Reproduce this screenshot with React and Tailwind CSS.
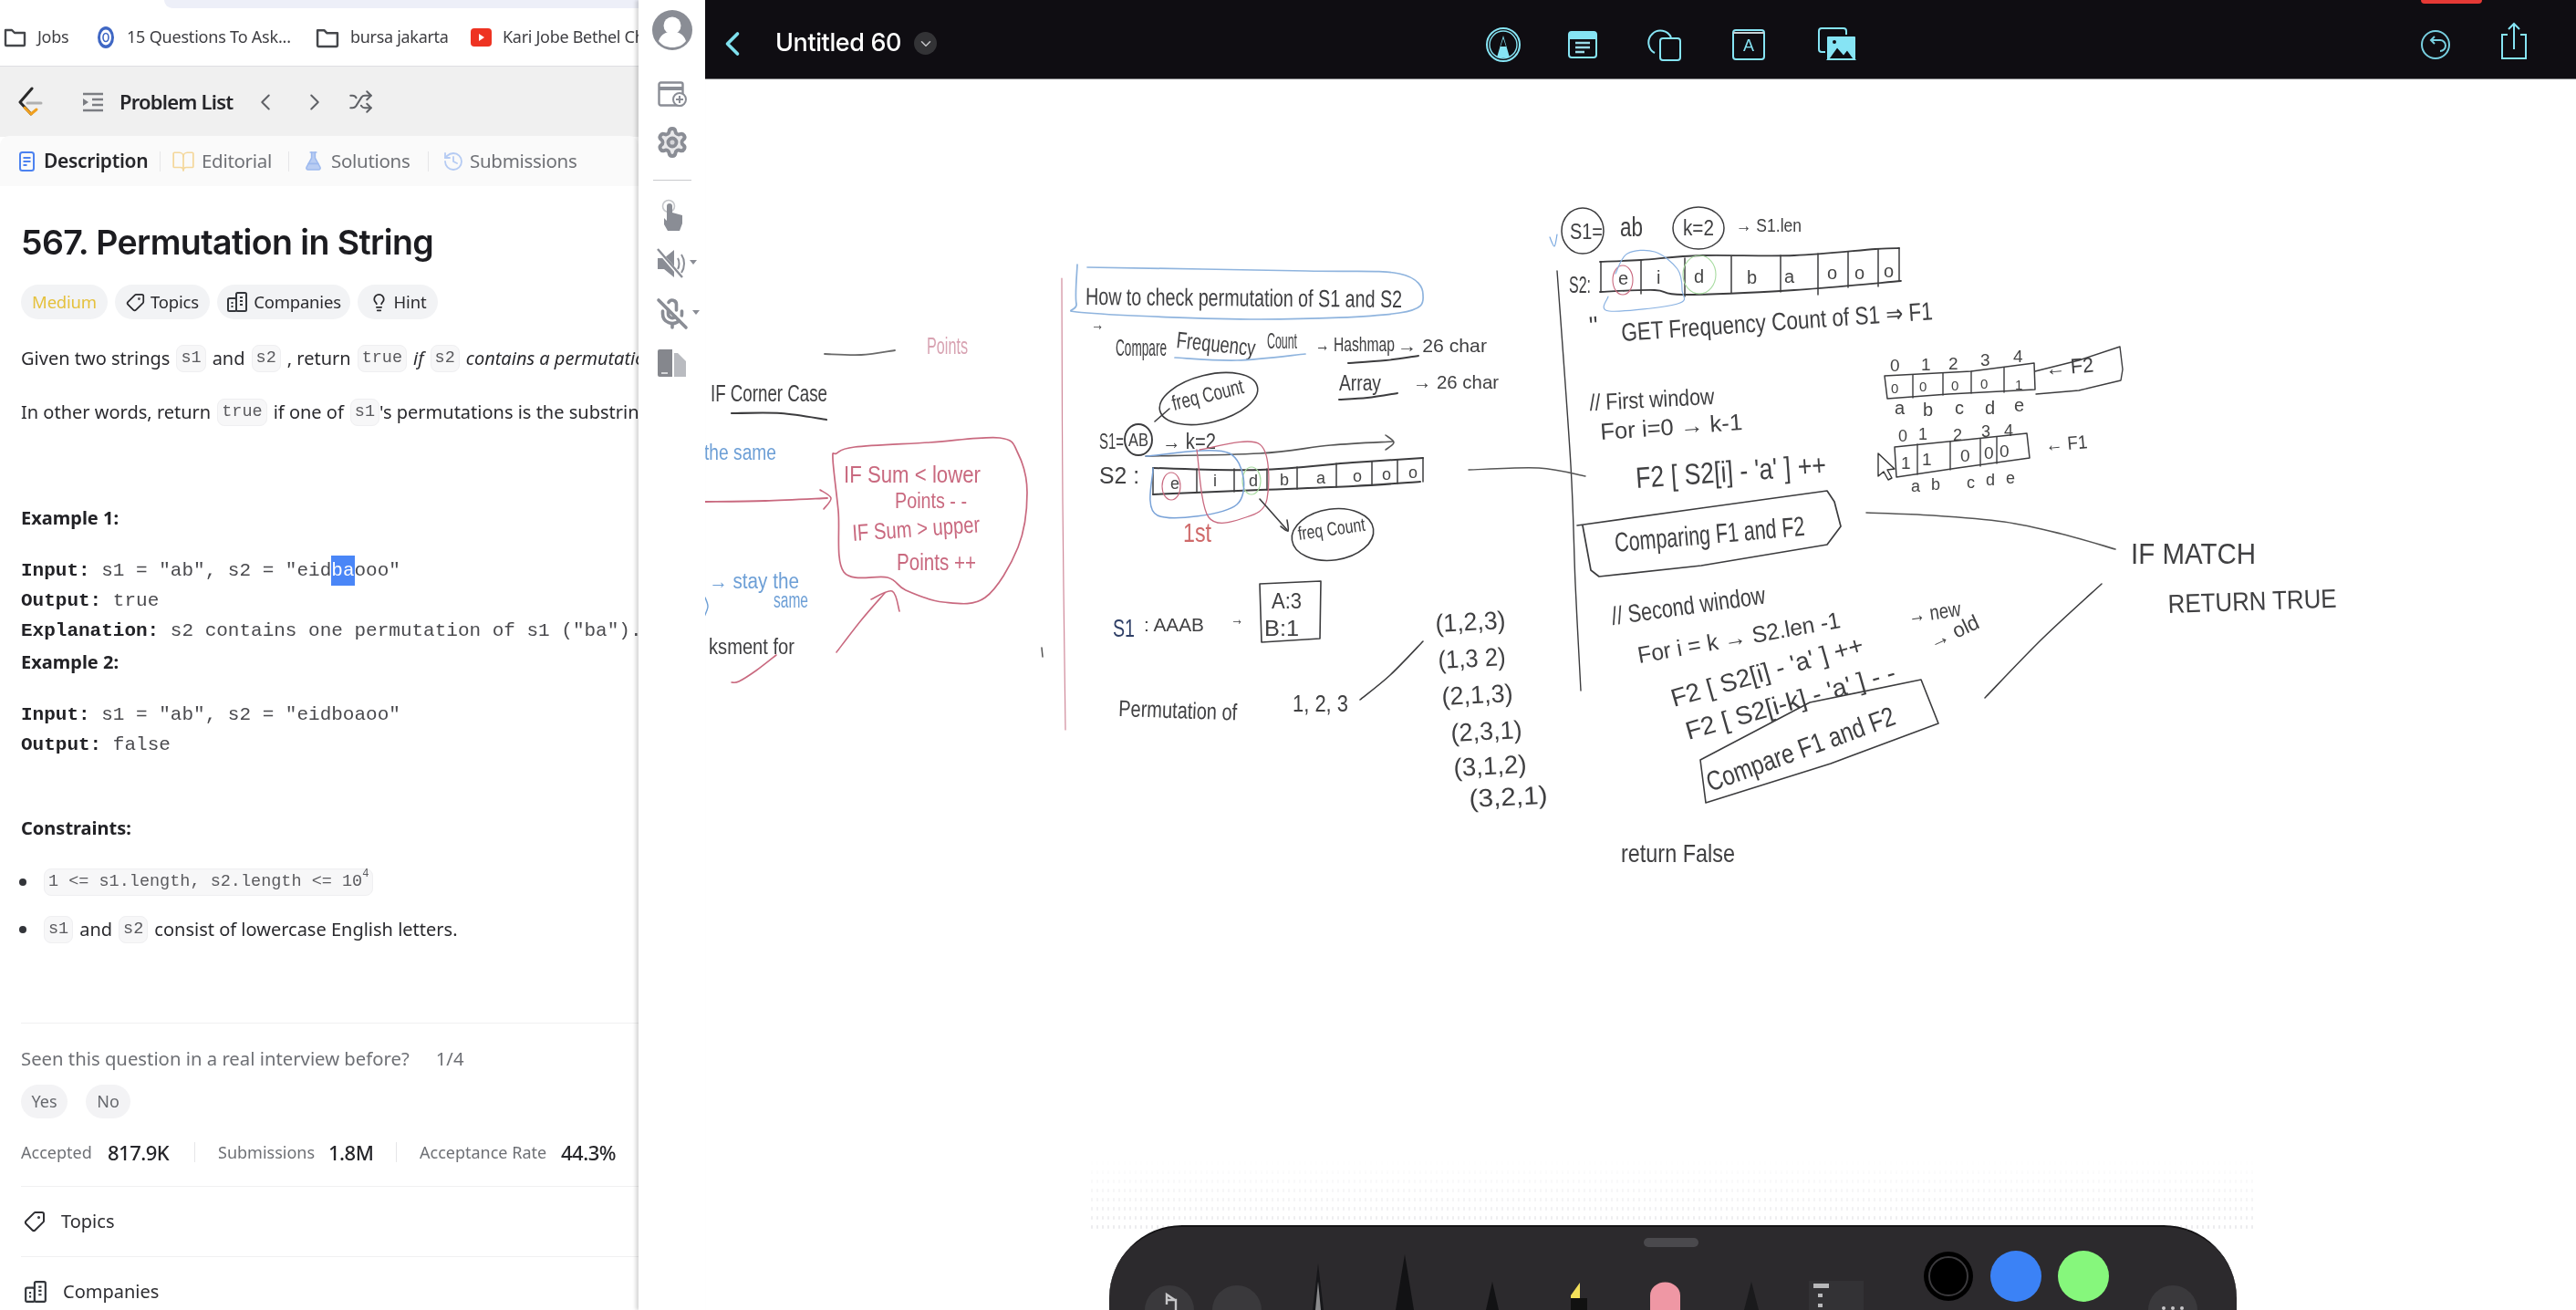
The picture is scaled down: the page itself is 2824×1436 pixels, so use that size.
import React from 'react';
import { ChevronLeft, ChevronRight, ChevronDown, Shuffle, Tag, Lightbulb, BookOpen, FlaskConical, History, Settings, MicOff } from 'lucide-react';

const smooth = (p, closed) => {
  const n = p.length;
  const g = (i) => (closed ? p[(i + n) % n] : p[Math.max(0, Math.min(n - 1, i))]);
  let d = `M${p[0][0]} ${p[0][1]}`;
  const end = closed ? n : n - 1;
  for (let i = 0; i < end; i++) {
    const a = g(i - 1), b = g(i), c = g(i + 1), e = g(i + 2);
    d += ` C${b[0] + (c[0] - a[0]) / 6} ${b[1] + (c[1] - a[1]) / 6} ${c[0] - (e[0] - b[0]) / 6} ${c[1] - (e[1] - b[1]) / 6} ${c[0]} ${c[1]}`;
  }
  return d + (closed ? 'Z' : '');
};

const INK = '#3c3c3e';
const PINK = '#c9697f';
const BLUE = '#8fb4de';

const S = ({ p, c = INK, w = 1.6, closed = false, o = 1 }) => (
  <path d={smooth(p, closed)} fill="none" stroke={c} strokeWidth={w} strokeLinecap="round" strokeLinejoin="round" opacity={o} />
);
const P = ({ p, c = INK, w = 1.6 }) => (
  <path d={'M' + p.map((q) => q.join(' ')).join(' L')} fill="none" stroke={c} strokeWidth={w} strokeLinecap="round" strokeLinejoin="round" />
);
const L = ({ x1, y1, x2, y2, c = INK, w = 1.5 }) => <line x1={x1} y1={y1} x2={x2} y2={y2} stroke={c} strokeWidth={w} strokeLinecap="round" />;
const T = ({ x, y, w, s = 18, r = 0, c = '#404042', children }) => (
  <text x={x} y={y} fontSize={s * 1.15} fill={c} textLength={w} lengthAdjust="spacingAndGlyphs" transform={r ? `rotate(${r} ${x} ${y})` : undefined}>
    {children}
  </text>
);
const E = ({ cx, cy, rx, ry, r = 0, c = INK, w = 1.6 }) => (
  <ellipse cx={cx} cy={cy} rx={rx} ry={ry} fill="none" stroke={c} strokeWidth={w} transform={r ? `rotate(${r} ${cx} ${cy})` : undefined} />
);

function Drawing() {
  return (
    <svg viewBox="774 87 2050 1349" className="absolute inset-0 w-[2050px] h-[1349px] font-['Liberation_Sans',sans-serif]">
      {/* left column */}
      <T x={1017} y={388} w={45} s={22} c="#d8a3b2">Points</T>
      <S p={[[905, 388], [945, 389], [982, 384]]} c="#6a6a6a" w={1.8} />
      <T x={780} y={440} w={128} s={22}>IF Corner Case</T>
      <S p={[[803, 453], [857, 453], [907, 460]]} w={2.2} />
      <T x={773} y={504} w={79} s={20} c="#6d9fd6">the same</T>
      <S p={[[773, 550], [840, 549], [908, 546]]} c={PINK} w={1.8} />
      <S p={[[900, 537], [912, 546], [904, 558]]} c={PINK} w={1.6} />
      <S closed c={PINK} w={1.7} p={[[918, 497], [938, 490], [1020, 485], [1097, 480], [1117, 497], [1127, 540], [1117, 600], [1081, 655], [1035, 660], [994, 647], [974, 633], [926, 627], [920, 560], [914, 503]]} />
      <T x={926} y={529} w={150} s={22} c={PINK}>IF Sum &lt; lower</T>
      <T x={982} y={557} w={79} s={20} c={PINK}>Points - -</T>
      <T x={936} y={593} w={140} s={22} r={-4} c={PINK}>IF Sum &gt; upper</T>
      <T x={984} y={625} w={87} s={22} c={PINK}>Points ++</T>
      <T x={778} y={645} w={99} s={20} c="#6d9fd6">→ stay the</T>
      <T x={849} y={666} w={38} s={20} c="#6d9fd6">same</T>
      <S p={[[774, 655], [777, 665], [773, 676]]} c="#6d9fd6" w={1.4} />
      <T x={778} y={717} w={94} s={20}>ksment for</T>
      <S p={[[918, 715], [945, 680], [971, 650]]} c={PINK} />
      <S p={[[956, 657], [979, 648], [987, 670]]} c={PINK} />
      <S p={[[852, 718], [830, 735], [811, 747], [803, 748]]} c={PINK} />
      <S p={[[1165, 305], [1166, 550], [1169, 800]]} c="#d08a9b" w={1.2} />
      <L x1={1143} y1={710} x2={1144} y2={720} c="#555" />

      {/* middle column */}
      <S c={BLUE} w={1.7} p={[[1182, 290], [1181, 333], [1193, 343], [1382, 350], [1535, 343], [1561, 323], [1535, 300], [1433, 297], [1193, 293]]} />
      <T x={1191} y={334} w={347} s={23} r={0.5}>How to check permutation of S1 and S2</T>
      <T x={1197} y={362} w={14} s={16}>→</T>
      <T x={1224} y={390} w={56} s={22}>Compare</T>
      <T x={1290} y={381} w={87} s={22} r={6}>Frequency</T>
      <T x={1390} y={382} w={33} s={20}>Count</T>
      <S p={[[1289, 392], [1357, 395], [1432, 388]]} c={BLUE} w={1.7} />
      <T x={1443} y={385} w={87} s={19}>→ Hashmap</T>
      <S p={[[1479, 398], [1520, 395], [1556, 390]]} w={2} />
      <T x={1533} y={386} w={98} s={18}>→ 26 char</T>
      <T x={1469} y={428} w={46} s={20}>Array</T>
      <S p={[[1469, 438], [1500, 436], [1533, 431]]} w={2} />
      <T x={1550} y={426} w={94} s={18}>→ 26 char</T>
      <E cx={1326} cy={437} rx={55} ry={26} r={-14} />
      <T x={1288} y={450} w={80} s={20} r={-14}>freq Count</T>
      <S p={[[1267, 462], [1283, 448]]} />
      <T x={1206} y={492} w={27} s={20}>S1=</T>
      <E cx={1249} cy={482} rx={15} ry={17} w={1.9} />
      <T x={1238} y={489} w={22} s={17}>AB</T>
      <T x={1275} y={492} w={59} s={20}>→ k=2</T>
      <S p={[[1257, 500], [1382, 497], [1460, 488], [1528, 484]]} c="#555" />
      <S p={[[1520, 477], [1529, 485], [1520, 493]]} c="#555" />
      <T x={1206} y={530} w={44} s={22}>S2 :</T>
      <S p={[[1265, 513], [1382, 515], [1484, 507], [1561, 502]]} w={2} />
      <S p={[[1265, 542], [1382, 537], [1484, 533], [1558, 528]]} w={2} />
      {[[1265, 513, 542], [1313, 514, 540], [1354, 514, 539], [1390, 514, 537], [1423, 512, 536], [1466, 508, 534], [1505, 506, 532], [1533, 504, 530], [1561, 502, 528]].map(([x, a, b]) => (
        <L key={x} x1={x} y1={a} x2={x} y2={b} w={1.5} />
      ))}
      {[['e', 1284, 536], ['i', 1331, 533], ['d', 1370, 533], ['b', 1404, 532], ['a', 1444, 530], ['o', 1484, 528], ['o', 1516, 526], ['o', 1545, 524]].map(([t, x, y], i) => (
        <text key={i} x={x} y={y} fontSize={18} fill="#454545">{t}</text>
      ))}
      <E cx={1285} cy={533} rx={10} ry={15} c={PINK} w={1.1} />
      <E cx={1373} cy={527} rx={10} ry={15} c="#a8dca0" w={1.1} />
      <S c="#7aa3d8" w={1.5} p={[[1257, 500], [1349, 497], [1357, 553], [1270, 565], [1265, 513]]} />
      <S c={PINK} w={1.3} p={[[1316, 493], [1382, 487], [1390, 547], [1367, 567], [1326, 567], [1313, 493]]} />
      <T x={1298} y={594} w={31} s={26} c="#cf6a6a">1st</T>
      <S p={[[1382, 547], [1413, 582]]} />
      <S p={[[1405, 577], [1413, 582], [1412, 570]]} />
      <E cx={1462} cy={586} rx={45} ry={28} r={-8} />
      <T x={1425} y={592} w={74} s={18} r={-8}>freq Count</T>
      <T x={1221} y={698} w={24} s={24} c="#2f3f66">S1</T>
      <T x={1255} y={692} w={66} s={18}>: AAAB</T>
      <T x={1350} y={685} w={14} s={16}>→</T>
      <P p={[[1382, 640], [1449, 637], [1448, 700], [1384, 704], [1382, 640]]} />
      <T x={1395} y={667} w={33} s={20}>A:3</T>
      <T x={1387} y={697} w={38} s={20}>B:1</T>
      <S p={[[1492, 767], [1525, 740], [1561, 703]]} />
      <T x={1227} y={785} w={130} s={22} r={2}>Permutation of</T>
      <T x={1418} y={780} w={61} s={22}>1, 2, 3</T>
      {[[1575, 693, 77, '(1,2,3)'], [1578, 733, 74, '(1,3 2)'], [1582, 773, 78, '(2,1,3)'], [1592, 813, 78, '(2,3,1)'], [1595, 851, 80, '(3,1,2)'], [1612, 885, 86, '(3,2,1)']].map(([x, y, w, t], i) => (
        <T key={i} x={x} y={y} w={w} s={24} r={-3}>{t}</T>
      ))}

      {/* right column */}
      <S p={[[1700, 260], [1705, 270], [1708, 257]]} c="#7aa9e0" w={1.2} />
      <E cx={1736} cy={253} rx={23} ry={25} w={1.5} />
      <T x={1722} y={262} w={36} s={20}>S1=</T>
      <T x={1777} y={259} w={25} s={26}>ab</T>
      <E cx={1863} cy={250} rx={28} ry={23} w={1.5} />
      <T x={1846} y={258} w={34} s={20}>k=2</T>
      <T x={1904} y={254} w={72} s={18}>→ S1.len</T>
      <S p={[[1708, 297], [1723, 510], [1728, 640], [1734, 757]]} w={1.4} />
      <T x={1721} y={321} w={24} s={22}>S2:</T>
      <S p={[[1755, 287], [1800, 285], [1866, 280], [1968, 280], [2057, 273], [2083, 272]]} w={1.8} />
      <S p={[[1755, 320], [1815, 318], [1846, 323], [1968, 318], [2085, 308]]} w={1.8} />
      {[[1756, 287, 320], [1800, 285, 322], [1848, 283, 325], [1899, 281, 321], [1953, 280, 320], [1994, 278, 323], [2027, 276, 315], [2060, 273, 314], [2083, 272, 308]].map(([x, a, b]) => (
        <L key={x} x1={x} y1={a} x2={x} y2={b} />
      ))}
      {[['e', 1775, 312], ['i', 1817, 311], ['d', 1858, 310], ['b', 1916, 311], ['a', 1957, 310], ['o', 2004, 306], ['o', 2034, 306], ['o', 2066, 304]].map(([t, x, y], i) => (
        <text key={i} x={x} y={y} fontSize={20} fill="#454545">{t}</text>
      ))}
      <E cx={1780} cy={307} rx={11} ry={16} c={PINK} w={1.1} />
      <S c="#8ab2e2" w={1.2} p={[[1772, 300], [1785, 278], [1815, 276], [1840, 295], [1845, 318], [1840, 333], [1765, 341], [1764, 325]]} />
      <E cx={1864} cy={301} rx={18} ry={21} c="#a8dca0" w={1.1} />
      <T x={1744} y={368} w={10} s={26} r={-5}>''</T>
      <T x={1779} y={374} w={342} s={24} r={-4}>GET Frequency Count of S1 ⇒ F1</T>

      <T x={1744} y={450} w={137} s={22} r={-3}>// First window</T>
      <T x={1756} y={482} w={156} s={22} r={-4}>For i=0 → k-1</T>
      <T x={1795} y={535} w={209} s={28} r={-4}>F2 [ S2[i] - 'a' ] ++</T>
      <P p={[[1730, 576], [1866, 557], [2004, 538], [2012, 550], [2019, 577], [2004, 597], [1866, 620], [1754, 632], [1745, 625], [1736, 576]]} w={1.7} />
      <T x={1772} y={605} w={209} s={26} r={-5}>Comparing F1 and F2</T>
      <S p={[[1611, 515], [1688, 513], [1739, 522]]} w={1.4} c="#555" />

      {/* F2 table */}
      {['0', '1', '2', '3', '4'].map((t, i) => (
        <text key={i} x={[2073, 2107, 2137, 2172, 2208][i]} y={[407, 406, 405, 401, 397][i]} fontSize={19} fill="#444">{t}</text>
      ))}
      <P p={[[2067, 412], [2162, 407], [2231, 398], [2232, 427], [2137, 432], [2070, 437], [2067, 412]]} w={1.5} />
      {[[2098, 411, 436], [2131, 409, 433], [2162, 407, 431], [2198, 403, 430]].map(([x, a, b]) => <L key={x} x1={x} y1={a} x2={x} y2={b} w={1.4} />)}
      {['0', '0', '0', '0', '1'].map((t, i) => (
        <text key={i} x={[2074, 2105, 2140, 2172, 2210][i]} y={[431, 429, 428, 426, 427][i]} fontSize={15} fill="#444">{t}</text>
      ))}
      {['a', 'b', 'c', 'd', 'e'].map((t, i) => (
        <text key={i} x={[2078, 2109, 2144, 2177, 2209][i]} y={[454, 456, 454, 454, 451][i]} fontSize={20} fill="#444">{t}</text>
      ))}
      <P p={[[2232, 407], [2280, 395], [2325, 380], [2328, 405], [2326, 417], [2280, 428], [2233, 432]]} w={1.4} />
      <T x={2244} y={412} w={53} s={20} r={-5}>← F2</T>

      {/* F1 table */}
      {['0', '1', '2', '3', '4'].map((t, i) => (
        <text key={i} x={[2082, 2104, 2142, 2173, 2198][i]} y={[484, 482, 483, 479, 478][i]} fontSize={18} fill="#444">{t}</text>
      ))}
      <P p={[[2078, 490], [2147, 483], [2223, 475], [2226, 502], [2147, 513], [2080, 523], [2078, 490]]} w={1.5} />
      {[[2103, 487, 520], [2139, 484, 515], [2172, 481, 511], [2190, 479, 508]].map(([x, a, b]) => <L key={x} x1={x} y1={a} x2={x} y2={b} w={1.4} />)}
      {['1', '1', '0', '0', '0'].map((t, i) => (
        <text key={i} x={[2085, 2108, 2150, 2176, 2193][i]} y={[514, 510, 506, 503, 501][i]} fontSize={19} fill="#444">{t}</text>
      ))}
      {['a', 'b', 'c', 'd', 'e'].map((t, i) => (
        <text key={i} x={[2096, 2118, 2157, 2178, 2200][i]} y={[539, 537, 535, 532, 530][i]} fontSize={18} fill="#444">{t}</text>
      ))}
      <T x={2244} y={495} w={46} s={18} r={-5}>← F1</T>

      {/* mouse cursor */}
      <path d="M2060 497 L2060 522 L2066 517 L2071 526 L2075 524 L2070 515 L2078 514 Z" fill="#fff" stroke="#333" strokeWidth="1.4" strokeLinejoin="round" />

      <S p={[[2047, 562], [2120, 565], [2198, 572], [2260, 585], [2320, 602]]} w={1.6} c="#555" />
      <T x={2337} y={618} w={137} s={27}>IF  MATCH</T>
      <T x={2378} y={672} w={185} s={25} r={-2}>RETURN  TRUE</T>
      <S p={[[2305, 640], [2240, 700], [2177, 765]]} w={1.5} />

      <T x={1769} y={685} w={170} s={24} r={-8}>// Second window</T>
      <T x={1798} y={727} w={225} s={22} r={-10}>For i = k → S2.len -1</T>
      <T x={2094} y={683} w={58} s={20} r={-8}>→ new</T>
      <T x={2120} y={712} w={58} s={20} r={-25}>→ old</T>
      <T x={1836} y={775} w={218} s={24} r={-16}>F2 [ S2[i] - 'a' ] ++</T>
      <T x={1852} y={811} w={238} s={24} r={-16}>F2 [ S2[i-k] - 'a' ] - -</T>
      <P p={[[1865, 833], [1985, 770], [2107, 745], [2126, 793], [2008, 837], [1871, 880], [1865, 833]]} w={1.6} />
      <T x={1876} y={868} w={218} s={26} r={-20}>Compare F1 and F2</T>
      <T x={1778} y={945} w={125} s={24}>return False</T>
    </svg>
  );
}

const Code = ({ children, className = '' }) => (
  <span className={`inline-flex items-center h-[30px] px-[4px] rounded-lg bg-[#f7f7f8] border border-[#efeff1] font-['Liberation_Mono',monospace] text-[18.5px] text-[#5a5a5e] ${className}`}>{children}</span>
);

function Pill({ icon, children, className = '' }) {
  return (
    <span className={`inline-flex items-center gap-[6px] h-[38px] rounded-full bg-[#f2f3f5] text-[18.5px] text-[#2b2b2f] justify-center tracking-[-0.2px] ${className}`}>
      {icon}
      {children}
    </span>
  );
}

const CompanyIcon = ({ size = 24 }) => (
  <svg width={size} height={size} viewBox="0 0 24 24" fill="none" stroke="#33363b" strokeWidth="2">
    <rect x="11" y="2" width="11" height="20" rx="1.5" />
    <rect x="2" y="8" width="9" height="14" rx="1.5" />
    <path d="M15 7h3M15 11h3M15 15h3M5.5 13h2M5.5 17h2" />
  </svg>
);

function LeftPanel() {
  const mono = "font-['Liberation_Mono',monospace] text-[21px] text-[#4a4a4e] h-[33px] leading-[33px] whitespace-pre";
  const lab = 'font-bold text-[#222226]';
  return (
    <div className="w-[700px] shrink-0 h-full flex flex-col overflow-hidden whitespace-nowrap bg-white font-['Noto_Sans',sans-serif] text-[20px] text-[#2a2a2e]">
      <div className="h-[73px] shrink-0 relative border-b border-[#dedfe2]">
        <div className="absolute left-[180px] right-0 top-0 h-[9px] rounded-bl-[10px] bg-[#edeff8]" />
        <div className="flex items-center h-full pt-[9px] text-[18px] text-[#3e3e42] [&>*]:shrink-0">
          <svg className="ml-[4px]" width="25" height="23" viewBox="0 0 25 23" fill="none" stroke="#45474b" strokeWidth="2.4" strokeLinejoin="round"><path d="M2 4h7l3 3h11v13a1 1 0 0 1-1 1H3a1 1 0 0 1-1-1z" /></svg>
          <span className="ml-[12px] w-[65px] tracking-[-0.3px]">Jobs</span>
          <svg width="20" height="26" viewBox="0 0 20 26" fill="none"><ellipse cx="10" cy="13" rx="9" ry="12" fill="#3f67c4" /><ellipse cx="10" cy="13" rx="6" ry="8.5" fill="#fff" /><ellipse cx="10" cy="13" rx="3" ry="4.5" fill="none" stroke="#3f67c4" strokeWidth="1.6" /></svg>
          <span className="ml-[13px] w-[207px] tracking-[-0.2px]">15 Questions To Ask...</span>
          <svg width="26" height="24" viewBox="0 0 25 23" fill="none" stroke="#45474b" strokeWidth="2.4" strokeLinejoin="round"><path d="M2 4h7l3 3h11v13a1 1 0 0 1-1 1H3a1 1 0 0 1-1-1z" /></svg>
          <span className="ml-[12px] w-[132px] tracking-[-0.3px]">bursa jakarta</span>
          <svg width="23" height="20" viewBox="0 0 23 20"><rect width="23" height="20" rx="4" fill="#ee3322" /><path d="M9 6l6 4-6 4z" fill="#fff" /></svg>
          <span className="ml-[12px] tracking-[-0.3px]">Kari Jobe Bethel Church Worship</span>
        </div>
      </div>
      <div className="h-[77px] shrink-0 bg-[#f0f0f0] flex items-center text-[#5f6166]">
        <svg className="ml-[19px]" width="28" height="34" viewBox="0 0 28 34" fill="none"><path d="M16 2 L3 17 L15 30" stroke="#2a2a2a" strokeWidth="3" strokeLinecap="round" strokeLinejoin="round" /><path d="M8 23 L15 30 L21 25" stroke="#f0a020" strokeWidth="3" strokeLinecap="round" strokeLinejoin="round" /><path d="M11 18h15" stroke="#b0b0b0" strokeWidth="3" strokeLinecap="round" /></svg>
        <svg className="ml-[43px]" width="24" height="24" viewBox="0 0 24 24" fill="none" stroke="#7b7d82" strokeWidth="2.6"><path d="M1 3h22M11 9h12M11 15h12M1 21h22" /><path d="M1 8l6 4-6 4z" fill="#7b7d82" stroke="none" /></svg>
        <span className="ml-[17px] w-[123px] text-[22px] font-semibold text-[#26262a] tracking-[-0.8px]">Problem List</span>
        <ChevronLeft className="ml-[22px]" size={30} strokeWidth={1.6} />
        <ChevronRight className="ml-[24px]" size={30} strokeWidth={1.6} />
        <Shuffle className="ml-[22px]" size={27} strokeWidth={1.8} />
      </div>
      <div className="h-[55px] shrink-0 bg-[#fafafa] rounded-t-[10px] -mt-px flex items-center text-[#6f7176] text-[20px] tracking-[-0.3px]">
        <svg className="ml-[21px]" width="17" height="22" viewBox="0 0 17 22" fill="none" stroke="#4c82f0" strokeWidth="2"><rect x="1" y="1" width="15" height="20" rx="2.5" /><path d="M4.5 7h8M4.5 11h8M4.5 15h4" /></svg>
        <span className="ml-[10px] w-[127px] text-[21px] font-semibold text-[#26262a]">Description</span>
        <span className="w-px h-[22px] bg-[#e6e6e8]" />
        <BookOpen className="ml-[12px] text-[#f4d79b]" size={26} strokeWidth={1.6} />
        <span className="ml-[7px] w-[95px] text-[20.5px]">Editorial</span>
        <span className="w-px h-[22px] bg-[#e6e6e8]" />
        <FlaskConical className="ml-[15px] text-[#9db9ee] fill-[#b9cdf3]" size={23} strokeWidth={1.6} />
        <span className="ml-[8px] w-[106px] text-[20.5px]">Solutions</span>
        <span className="w-px h-[22px] bg-[#e6e6e8]" />
        <History className="ml-[15px] text-[#b5cbf3]" size={24} strokeWidth={1.8} />
        <span className="ml-[6px] text-[20.5px]">Submissions</span>
      </div>

      <div className="flex flex-col px-[23px]">
        <h1 className="mt-[42px] h-[40px] leading-[40px] text-[37.5px] font-semibold text-[#1c1c20] tracking-[-0.6px] font-['Inter',sans-serif]">567. Permutation in String</h1>
        <div className="mt-[26px] flex gap-[8px]">
          <Pill className="w-[95px] text-[#e5c13d]">Medium</Pill>
          <Pill className="w-[104px]" icon={<Tag className="rotate-90" size={21} strokeWidth={2} />}>Topics</Pill>
          <Pill className="w-[146px]" icon={<CompanyIcon />}>Companies</Pill>
          <Pill className="w-[88px]" icon={<Lightbulb size={21} strokeWidth={2} />}>Hint</Pill>
        </div>
        <div className="mt-[28px] h-[30px] flex items-center gap-[7px]">
          <span>Given two strings</span><Code>s1</Code><span>and</span><Code>s2</Code><span>, return</span><Code>true</Code><span className="italic">if</span><Code>s2</Code><span className="italic">contains a permutation of</span><Code>s1</Code>
        </div>
        <div className="mt-[29px] h-[30px] flex items-center gap-[7px]">
          <span>In other words, return</span><Code>true</Code><span>if one of</span><Code className="-mr-[7px]">s1</Code><span>'s permutations is the substring of</span><Code>s2</Code>
        </div>
        <div className="mt-[86px] h-[30px] leading-[30px] font-bold text-[#222226]">Example 1:</div>
        <div className={`mt-[26px] ${mono}`}><span className={lab}>Input:</span> s1 = "ab", s2 = "eid<span className="bg-[#4a86f7] text-white inline-block h-[33px]">ba</span>ooo"</div>
        <div className={mono}><span className={lab}>Output:</span> true</div>
        <div className={mono}><span className={lab}>Explanation:</span> s2 contains one permutation of s1 ("ba").</div>
        <div className="mt-[3px] h-[30px] leading-[30px] font-bold text-[#222226]">Example 2:</div>
        <div className={`mt-[26px] ${mono}`}><span className={lab}>Input:</span> s1 = "ab", s2 = "eidboaoo"</div>
        <div className={mono}><span className={lab}>Output:</span> false</div>
        <div className="mt-[60px] h-[30px] leading-[30px] font-bold text-[#222226]">Constraints:</div>
        <div className="mt-[29px] h-[30px] flex items-center">
          <span className="ml-[-2px] w-[8px] h-[8px] rounded-full bg-[#33353a] mr-[19px]" />
          <Code>1 &lt;= s1.length, s2.length &lt;= 10<sup className="text-[12px] -mt-[6px]">4</sup></Code>
        </div>
        <div className="mt-[22px] h-[30px] flex items-center gap-[7px]">
          <span className="ml-[-2px] w-[8px] h-[8px] rounded-full bg-[#33353a] mr-[12px]" />
          <Code>s1</Code><span>and</span><Code>s2</Code><span>consist of lowercase English letters.</span>
        </div>
      </div>
      <div className="ml-[23px] mt-[87px] h-px shrink-0 bg-[#f0f0f1]" />
      <div className="px-[23px] mt-[23px] h-[30px] leading-[30px] text-[20.3px] text-[#6e7075]">Seen this question in a real interview before?<span className="ml-[29px]">1/4</span></div>
      <div className="px-[23px] mt-[14px] flex gap-[20px] text-[18px] text-[#66686d]">
        <span className="w-[51px] h-[37px] rounded-full bg-[#f3f3f5] flex items-center justify-center">Yes</span>
        <span className="w-[49px] h-[37px] rounded-full bg-[#f3f3f5] flex items-center justify-center">No</span>
      </div>
      <div className="px-[23px] mt-[22px] h-[30px] flex items-center text-[18px] text-[#6e7075]">
        <span className="w-[95px]">Accepted</span>
        <span className="w-[95px] text-[22px] font-medium text-[#26262a] tracking-[-0.5px]">817.9K</span>
        <span className="w-px h-[22px] bg-[#e6e6e8] mr-[25px]" />
        <span className="w-[121px]">Submissions</span>
        <span className="w-[74px] text-[22px] font-medium text-[#26262a] tracking-[-0.5px]">1.8M</span>
        <span className="w-px h-[22px] bg-[#e6e6e8] mr-[25px]" />
        <span className="w-[155px]">Acceptance Rate</span>
        <span className="text-[22px] font-medium text-[#26262a] tracking-[-0.5px]">44.3%</span>
      </div>
      <div className="ml-[23px] mt-[22px] h-px shrink-0 bg-[#f0f0f1]" />
      <div className="pl-[26px] h-[76px] shrink-0 flex items-center gap-[17px] text-[#2e2e32]"><Tag className="rotate-90" size={24} strokeWidth={2} />Topics</div>
      <div className="ml-[23px] h-px shrink-0 bg-[#f0f0f1]" />
      <div className="pl-[26px] h-[76px] shrink-0 flex items-center gap-[17px] text-[#2e2e32]"><CompanyIcon size={26} />Companies</div>
    </div>
  );
}

function SideBar() {
  const c = '#8a8d95';
  return (
    <div className="w-[73px] shrink-0 h-full bg-white flex flex-col items-center shadow-[-3px_0_4px_rgba(0,0,0,0.16)] relative">
      <svg className="mt-[10px]" width="46" height="46" viewBox="0 0 46 46"><circle cx="23" cy="23" r="22" fill="#8a8d95" /><circle cx="23" cy="18" r="9.5" fill="#fff" /><path d="M8 35c3-9 9-10 15-10s12 1 15 10c-4 5-9 7-15 7s-11-2-15-7z" fill="#fff" /></svg>
      <svg className="mt-[33px]" width="32" height="28" viewBox="0 0 32 28" fill="none"><rect x="1.5" y="1.5" width="26" height="25" rx="2" stroke={c} strokeWidth="2.4" /><path d="M1.5 8h26" stroke={c} strokeWidth="4" /><circle cx="24" cy="20" r="7" fill="#fff" stroke={c} strokeWidth="2" /><path d="M24 16v8M20 20h8" stroke={c} strokeWidth="2" /></svg>
      <Settings className="mt-[21px] text-[#8a8d95] fill-[#8a8d95]/20" size={36} strokeWidth={2.6} />
      <div className="mt-[23px] w-[42px] h-px bg-[#c8c9cd]" />
      <svg className="mt-[20px]" width="28" height="36" viewBox="0 0 28 36"><circle cx="10" cy="8" r="6.5" fill="none" stroke="#c4c6ca" strokeWidth="1.6" /><path d="M8 8v16l-3-3v7l4 7h13l3-8v-9l-11-3V8a1.5 1.5 0 0 0-6 0z" fill={c} /></svg>
      <div className="relative mt-[19px] h-[32px] flex items-center">
        <svg width="36" height="34" viewBox="0 0 36 34" fill="none"><path d="M2 11h7l11-9v30l-11-9H2z" fill={c} /><path d="M24 11c2 3 2 9 0 12M28 7c4 6 4 14 0 20" stroke={c} strokeWidth="2" /><path d="M2 2l26 30" stroke="#fff" strokeWidth="4" /><path d="M2 1l27 31" stroke={c} strokeWidth="2.4" /></svg>
        <span className="absolute left-[37px] top-[12px] w-0 h-0 border-x-[4px] border-x-transparent border-t-[5px] border-t-[#8a8d95]" />
      </div>
      <div className="relative mt-[21px] h-[36px] flex items-center">
        <MicOff className="text-[#8a8d95]" size={36} strokeWidth={2.4} />
        <span className="absolute left-[40px] top-[14px] w-0 h-0 border-x-[4px] border-x-transparent border-t-[5px] border-t-[#8a8d95]" />
      </div>
      <svg className="mt-[21px]" width="33" height="30" viewBox="0 0 33 30"><path d="M1 2a2 2 0 0 1 2-2h14v30H3a2 2 0 0 1-2-2z" fill="#85878d" /><path d="M19 4h4l9 9v17H19z" fill="#b9bbc0" /><rect x="5" y="25" width="7" height="2" fill="#d6d7da" /></svg>
    </div>
  );
}

function HeaderIcons() {
  const c = '#86e4f4';
  return (
    <>
      <div className="absolute left-[1628px] top-[29px] flex items-center">
        <svg width="40" height="40" viewBox="0 0 40 40" fill="none" stroke={c} strokeWidth="2"><circle cx="20" cy="20" r="18" /><circle cx="20" cy="20" r="15" strokeWidth="1.4" /><path d="M13 34 L20 10 L27 34z" fill={c} stroke="none" /><path d="M17 22l3-9 3 9z" fill="#0f0d12" stroke="none" /></svg>
        <svg className="ml-[50px]" width="34" height="34" viewBox="0 0 34 34" fill="none" stroke={c} strokeWidth="2"><rect x="2" y="3" width="30" height="28" rx="3" /><path d="M2 8a5 5 0 0 1 5-5h20a5 5 0 0 1 5 5v2H2z" fill={c} /><path d="M9 15h16M9 20h16M9 25h10" strokeWidth="2.4" stroke="#9adbe8" /></svg>
        <svg className="ml-[54px]" width="38" height="38" viewBox="0 0 38 38" fill="none" stroke={c} strokeWidth="2"><path d="M8 28 A13 13 0 1 1 26 11" /><rect x="14" y="12" width="22" height="24" rx="3" /></svg>
        <svg className="ml-[53px]" width="40" height="36" viewBox="0 0 40 36" fill="none" stroke={c} strokeWidth="2"><rect x="3" y="2" width="34" height="32" rx="3" /><path d="M3 5h34" stroke="#c8d0d4" strokeWidth="2" /><text x="20" y="25" fontSize="18" fill={c} stroke="none" textAnchor="middle" fontFamily="Liberation Sans">A</text></svg>
        <svg className="ml-[55px]" width="44" height="38" viewBox="0 0 44 38" fill="none" stroke={c} strokeWidth="2"><rect x="2" y="1" width="30" height="26" rx="3" /><rect x="10" y="9" width="33" height="28" rx="2" fill={c} stroke="#0f0d12" /><path d="M12 35l10-14 7 8 4-5 8 11z" fill="#0f0d12" /><circle cx="19" cy="16" r="3" fill="#0f0d12" /></svg>
      </div>
      <div className="absolute left-[2654px] top-[32px] flex items-center">
        <svg width="32" height="34" viewBox="0 0 32 34" fill="none" stroke="#78cfe0" strokeWidth="2"><circle cx="16" cy="17" r="15" /><path d="M21 24a6 6 0 0 0 0-12h-9M15 8l-4 4 4 4" /></svg>
        <svg className="ml-[54px] -mt-[8px]" width="32" height="42" viewBox="0 0 32 42" fill="none" stroke={c} strokeWidth="2"><path d="M9 14H3v26h26V14h-6" /><path d="M16 30V2M10 8l6-6 6 6" /></svg>
      </div>
    </>
  );
}

function Toolbar() {
  return (
    <>
      <div className="absolute left-[421px] top-[1270px] w-[1280px] h-[80px] bg-[radial-gradient(#dedee2_1px,transparent_1.2px)] bg-[size:6px_10px] [mask-image:linear-gradient(to_top,black,transparent)] opacity-60" />
      <div className="absolute left-[443px] top-[1343px] w-[1236px] h-[93px] bg-[#2c2a2d] border-t-2 border-[#141315] rounded-t-[80px] overflow-hidden">
        <div className="absolute left-[586px] top-[12px] w-[60px] h-[10px] rounded-full bg-[#4a494d]" />
        <svg viewBox="1217 1343 1236 93" className="absolute -left-px -top-[2px] w-[1236px] h-[93px]">
          <circle cx="1284" cy="1436" r="27" fill="#3a393c" />
          <circle cx="1358" cy="1436" r="27" fill="#3a393c" />
          <path d="M1290 1425 l-9 -6 v11 M1281 1425h10v11" fill="none" stroke="#c6c6c8" strokeWidth="2.4" />
          <path d="M1447 1385 L1453 1436 H1441 Z" fill="#17171a" />
          <path d="M1447 1405 L1450 1436 H1444 Z" fill="#8b8b8d" />
          <path d="M1542 1375 L1552 1436 H1532 Z" fill="#121214" />
          <path d="M1638 1405 L1645 1436 H1631 Z" fill="#121214" />
          <path d="M1724 1420 L1734 1406 V1423 H1724 Z" fill="#f3e05a" />
          <rect x="1724" y="1423" width="18" height="13" fill="#111" />
          <path d="M1811 1420a16 14 0 0 1 33 0v16h-33z" fill="#ef97a4" />
          <path d="M1922 1405 L1930 1436 H1914 Z" fill="#1a1a1c" />
          <rect x="1985" y="1404" width="60" height="32" fill="#333235" />
          <rect x="1990" y="1407" width="17" height="5" fill="#b8b8ba" />
          <rect x="1995" y="1418" width="5" height="4" fill="#b8b8ba" />
          <rect x="1995" y="1429" width="5" height="4" fill="#b8b8ba" />
          <circle cx="2138" cy="1399" r="27" fill="#000" />
          <circle cx="2138" cy="1399" r="21" fill="#000" stroke="#3b3a3d" strokeWidth="2" />
          <circle cx="2212" cy="1399" r="28" fill="#3b82f6" />
          <circle cx="2286" cy="1399" r="28" fill="#86f77c" />
          <circle cx="2384" cy="1436" r="27" fill="#3a393c" />
          <circle cx="2374" cy="1434" r="2" fill="#c6c6c8" /><circle cx="2384" cy="1434" r="2" fill="#c6c6c8" /><circle cx="2394" cy="1434" r="2" fill="#c6c6c8" />
        </svg>
      </div>
    </>
  );
}

export default function App() {
  return (
    <div className="w-[2824px] h-[1436px] flex overflow-hidden bg-white blur-[0.5px]">
      <LeftPanel />
      <SideBar />
      <div className="flex-1 h-full relative flex flex-col">
        <div className="h-[87px] shrink-0 pt-[9px] bg-[#0f0d12] border-b border-[#77777a] flex items-center text-white">
          <ChevronLeft className="ml-[8px] text-[#7fe0ee]" size={44} strokeWidth={2} />
          <span className="ml-[25px] text-[27px] font-medium font-['Inter',sans-serif] tracking-[-0.4px]">Untitled 60</span>
          <span className="ml-[14px] w-[25px] h-[25px] rounded-full bg-[#333336] flex items-center justify-center"><ChevronDown className="text-[#c5c5c8]" size={18} strokeWidth={2} /></span>
        </div>
        <div className="flex-1 relative"><Drawing /></div>
        <div className="absolute top-0 left-[1881px] w-[67px] h-[4px] rounded-b-md bg-[#e53935]" />
        <div className="absolute left-[-773px] top-0"><HeaderIcons /></div>
        <div className="absolute left-0 top-0"><Toolbar /></div>
      </div>
    </div>
  );
}
